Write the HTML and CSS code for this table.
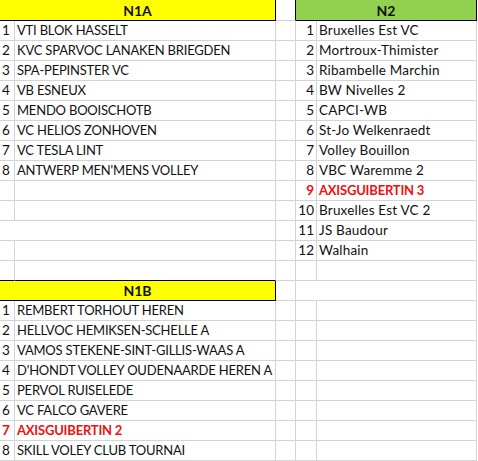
FILE: index.html
```html
<!DOCTYPE html>
<html>
<head>
<meta charset="utf-8">
<link rel="stylesheet" href="styles.css">
</head>
<body>
<div class="sheet">
  <div class="c span2 head yellow hb hr">N1A</div><div class="c hr"></div><div class="c span2 head green hb hr">N2</div>

  <div class="c">1</div><div class="c caps">VTI BLOK HASSELT</div><div class="c"></div><div class="c num">1</div><div class="c name">Bruxelles Est VC</div>
  <div class="c">2</div><div class="c caps">KVC SPARVOC LANAKEN BRIEGDEN</div><div class="c"></div><div class="c num">2</div><div class="c name">Mortroux-Thimister</div>
  <div class="c">3</div><div class="c caps">SPA-PEPINSTER VC</div><div class="c"></div><div class="c num">3</div><div class="c name">Ribambelle Marchin</div>
  <div class="c">4</div><div class="c caps">VB ESNEUX</div><div class="c"></div><div class="c num">4</div><div class="c name">BW Nivelles 2</div>
  <div class="c">5</div><div class="c caps">MENDO BOOISCHOTB</div><div class="c"></div><div class="c num">5</div><div class="c name">CAPCI-WB</div>
  <div class="c">6</div><div class="c caps">VC HELIOS ZONHOVEN</div><div class="c"></div><div class="c num">6</div><div class="c name">St-Jo Welkenraedt</div>
  <div class="c">7</div><div class="c caps">VC TESLA LINT</div><div class="c"></div><div class="c num">7</div><div class="c name">Volley Bouillon</div>
  <div class="c">8</div><div class="c caps">ANTWERP MEN'MENS VOLLEY</div><div class="c"></div><div class="c num">8</div><div class="c name">VBC Waremme 2</div>
  <div class="c"></div><div class="c"></div><div class="c"></div><div class="c num red">9</div><div class="c caps red">AXISGUIBERTIN 3</div>
  <div class="c"></div><div class="c"></div><div class="c"></div><div class="c num">10</div><div class="c name">Bruxelles Est VC 2</div>
  <div class="c span2"></div><div class="c"></div><div class="c num">11</div><div class="c name">JS Baudour</div>
  <div class="c"></div><div class="c"></div><div class="c"></div><div class="c num">12</div><div class="c name">Walhain</div>
  <div class="c hb"></div><div class="c hb"></div><div class="c"></div><div class="c"></div><div class="c"></div>

  <div class="c span2 head yellow hb hr">N1B</div><div class="c"></div><div class="c span2"></div>

  <div class="c">1</div><div class="c caps">REMBERT TORHOUT HEREN</div><div class="c"></div><div class="c"></div><div class="c"></div>
  <div class="c">2</div><div class="c caps">HELLVOC HEMIKSEN-SCHELLE A</div><div class="c"></div><div class="c"></div><div class="c"></div>
  <div class="c">3</div><div class="c caps">VAMOS STEKENE-SINT-GILLIS-WAAS A</div><div class="c"></div><div class="c"></div><div class="c"></div>
  <div class="c">4</div><div class="c caps">D'HONDT VOLLEY OUDENAARDE HEREN A</div><div class="c"></div><div class="c"></div><div class="c"></div>
  <div class="c">5</div><div class="c caps">PERVOL RUISELEDE</div><div class="c"></div><div class="c"></div><div class="c"></div>
  <div class="c">6</div><div class="c caps">VC FALCO GAVERE</div><div class="c"></div><div class="c"></div><div class="c"></div>
  <div class="c red">7</div><div class="c caps red">AXISGUIBERTIN 2</div><div class="c"></div><div class="c"></div><div class="c"></div>
  <div class="c">8</div><div class="c caps">SKILL VOLEY CLUB TOURNAI</div><div class="c"></div><div class="c"></div><div class="c"></div>
</div>
</body>
</html>
```

FILE: styles.css
```css
html, body {
  margin: 0;
  padding: 0;
  background: #fff;
}
.sheet {
  display: grid;
  grid-template-columns: 15px 261px 20px 21px 160px;
  grid-template-rows: 21px repeat(22, 20px);
  font-family: Lato, "Open Sans", sans-serif;
  font-size: 13.5px;
  color: #111;
}
.c {
  box-sizing: border-box;
  border-right: 1px solid #d4d4d4;
  border-bottom: 1px solid #d4d4d4;
  padding: 0 2px 2px 2px;
  display: flex;
  align-items: flex-end;
  line-height: 15px;
  white-space: nowrap;
  overflow: visible;
}
.span2 {
  grid-column: span 2;
}
.num {
  justify-content: flex-end;
}
.caps {
  font-size: 13px;
  letter-spacing: -0.2px;
}
.name {
  letter-spacing: 0.2px;
}
.head {
  justify-content: center;
  font-weight: bold;
  font-size: 14px;
}
.yellow {
  background: #ffff00;
}
.green {
  background: #92d050;
}
.hb {
  border-bottom-color: #000;
}
.hr {
  border-right-color: #000;
}
.red {
  color: #ee1111;
  font-weight: bold;
}
```
